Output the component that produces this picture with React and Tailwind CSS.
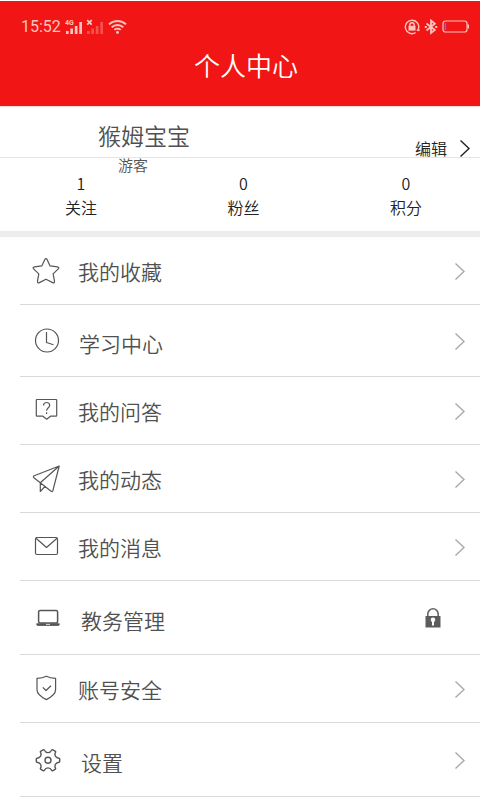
function StarIcon() {
  return (
    <path d="M14 1.600c.6 0 .9.500 1.200 1.100l2.900 6.200 7.300.9c1.400.2 1.800 1.200.9 2.100l-5.200 5 1.400 7.300c.2 1.400-.6 2-1.800 1.400L14 22.200l-6.600 3.400c-1.300.6-2.100 0-1.900-1.400l1.300-7.300-5.200-5c-.9-.9-.5-1.900.9-2.100l7.300-.9 2.900-6.200c.4-.7.7-1.100 1.300-1.100z" />
  )
}

function ClockIcon() {
  return (
    <>
      <circle cx="14" cy="13.5" r="11.5" />
      <path d="M13.500 5v10.500l7 2.200" />
    </>
  )
}

function QuestionIcon() {
  return (
    <>
      <path d="M5 2.500h19q.7 0 .7.700v15.300q0 .7-.7.700h-5.500l-3.800 3-3.800-3H5q-.7 0-.7-.7V3.200q0-.7.7-.7z" />
      <path d="M11.500 8.500c0-4 6.200-4 6.200 0 0 2.300-3.100 2.400-3.100 5.300M14.600 15.200v1.700" />
    </>
  )
}

function PlaneIcon() {
  return (
    <path d="M27.200 1 2.200 10.800c-1 .4-1.100 1.200-.3 1.900l17.200 13.500c.9.600 1.500.4 1.800-.5zM27.200 1 8.300 17.700v8.800l4.700-5.200" />
  )
}

function MailIcon() {
  return (
    <>
      <rect x="3.500" y="4.500" width="22" height="17" rx="1.500" />
      <path d="m4 5.300 10.500 9.200L25 5.300" />
    </>
  )
}

function LaptopIcon() {
  return (
    <>
      <rect x="4.600" y="6.600" width="19" height="12.500" rx="1.500" strokeWidth="1.500" />
      <path d="M2.700 19.700h22.600v.8q0 1-1.500 1H4.200q-1.500 0-1.500-1z" fill="currentColor" strokeWidth=".8" />
      <path d="M12 20.400h4" stroke="#fff" strokeWidth=".8" />
    </>
  )
}

function ShieldIcon() {
  return (
    <>
      <path d="M14.300 1.200c2.400 1.300 5.700 2 9.300 2.100v11.500c0 4-4 7.200-9.300 9.800-5.300-2.600-9.300-5.800-9.300-9.800V3.300c3.600-.1 6.900-.8 9.300-2.100z" />
      <path d="m10.800 12.300 3.200 3.200 5-4.700" />
    </>
  )
}

function GearIcon() {
  return (
    <>
      <path d="M9.500 3.600q.6 0 .9.700 1.100 2.300 3.600 2.300t3.600-2.300q.3-.7.900-.7l2.900 1.700q.4.400.1 1-1.200 2.200.1 4 1.100 1.700 3.400 1.900.7 0 .7.700v2.700q0 .7-.7.700-2.300.2-3.400 1.900-1.300 1.800-.1 4 .3.600-.1 1l-2.900 1.700q-.6 0-.9-.7-1.100-2.300-3.600-2.300t-3.600 2.300q-.3.700-.9.700l-2.900-1.700q-.4-.4-.1-1 1.200-2.200-.1-4-1.100-1.700-3.400-1.900-.7 0-.7-.7v-2.700q0-.7.7-.7 2.300-.2 3.400-1.900 1.300-1.800.1-4-.3-.6.100-1z" strokeWidth="1.400" />
      <circle cx="14" cy="14.300" r="3" strokeWidth="1.400" />
    </>
  )
}

function ChevronIcon({ className }) {
  return (
    <svg className={className} width="12" height="18" viewBox="0 0 12 18" fill="none" stroke="currentColor" strokeWidth="1.400">
      <path d="m1.500 1.500 8.500 8-8.500 8" />
    </svg>
  )
}

function LockIcon() {
  return (
    <svg className="mr-[39px]" width="16" height="20" viewBox="0 0 16 20">
      <path d="M2.800 9V6a5.200 5.200 0 0 1 10.400 0V9" fill="none" stroke="#666" strokeWidth="1.600" />
      <path d="M.5 8h15v11.500H.5z" fill="#5c5c5c" />
      <circle cx="8" cy="11.800" r="2.300" fill="#fff" />
      <path d="M7 12.500h2v5H7z" fill="#fff" />
    </svg>
  )
}

function StatusBar() {
  return (
    <div className="flex h-7 items-center justify-between pl-[21px] pr-[10px] text-[#fcc4bd]">
      <div className="flex items-center">
        <span className="font-[Roboto,sans-serif] text-base leading-5 font-normal">15:52</span>
        <svg className="ml-1" width="40" height="16" viewBox="0 0 40 16" fill="currentColor">
          <text x="0" y="6" fontSize="7" fontWeight="700" fontFamily="Roboto, sans-serif">4G</text>
          <path d="M1 12h2.700v3H1zM5.300 9.500H8V15H5.300zM9.800 7h2.700v8H9.800zM14.300 3H17v12h-2.700z" />
          <path d="m22.200 1.200 4.500 4.500m0-4.500-4.500 4.500" stroke="currentColor" strokeWidth="1.800" />
          <path d="M22 12h2.700v3H22zM26.300 9.500H29V15h-2.700zM30.800 7h2.700v8h-2.700zM35.300 3H38v12h-2.700z" opacity=".35" />
        </svg>
        <svg className="ml-[3px]" width="19" height="16" viewBox="0 0 19 16" fill="none" stroke="currentColor" strokeWidth="1.900">
          <path d="M1 5.400a12.500 12.500 0 0 1 17 0M3.700 8.200a8.600 8.600 0 0 1 11.600 0M6.300 10.900a4.800 4.800 0 0 1 6.400 0" />
          <circle cx="9.500" cy="13.200" r="1.500" fill="currentColor" stroke="none" />
        </svg>
      </div>
      <div className="flex items-center gap-1">
        <svg width="16" height="16" viewBox="0 0 16 16" fill="none" stroke="currentColor" strokeWidth="1.400">
          <path d="M11.500 13.700a6.700 6.700 0 1 1 2.900-3.600M13 11.800l1.400-1.700.8 2" />
          <path d="M5.800 7.500V6a2.200 2.200 0 0 1 4.400 0v1.500" />
          <path d="M4.500 6.800h7v4.800h-7z" fill="currentColor" stroke="none" />
        </svg>
        <svg width="14" height="16" viewBox="0 0 14 16" fill="none" stroke="currentColor" strokeWidth="1.800">
          <path d="m2.500 4.500 8.300 6.500L7 14v-12.500l3.800 3.300-8.300 6.700" />
          <path d="M.8 8h2M11.200 8h2" />
        </svg>
        <svg width="28" height="14" viewBox="0 0 28 14">
          <rect x="1" y="1" width="24" height="11" rx="2.500" fill="none" stroke="currentColor" strokeWidth="1.200" />
          <path d="M25.500 4.500h1.500v4h-1.500z" fill="currentColor" />
          <path d="M2.600 2.800h1.600v7.400H2.600z" fill="#7a6be0" />
        </svg>
      </div>
    </div>
  )
}

const stats = [
  { label: '关注', count: 1 },
  { label: '粉丝', count: 0 },
  { label: '积分', count: 0 },
]

const normalRow = 'h-[68px] pl-3 gap-[18px]'
const tallRow = 'h-[74px] pl-[14px] gap-[19px]'

const menu = [
  { label: '我的收藏', icon: <StarIcon />, row: normalRow },
  { label: '学习中心', icon: <ClockIcon />, row: 'h-[72px] pl-[13px] gap-[18px]', text: 'pt-1' },
  { label: '我的问答', icon: <QuestionIcon />, row: normalRow },
  { label: '我的动态', icon: <PlaneIcon />, row: normalRow },
  { label: '我的消息', icon: <MailIcon />, row: normalRow },
  { label: '教务管理', icon: <LaptopIcon />, row: tallRow, text: 'pt-1', locked: true },
  { label: '账号安全', icon: <ShieldIcon />, row: normalRow },
  { label: '设置', icon: <GearIcon />, row: tallRow, text: 'pt-1' },
]

function MenuRow({ item }) {
  return (
    <li>
      <a href="#" className={`flex items-center border-b border-[#d9d9d9] ${item.row}`}>
        <svg className="shrink-0 text-[#555]" width="28" height="28" viewBox="0 0 28 28" fill="none" stroke="currentColor" strokeWidth="1.200" strokeLinejoin="round">
          {item.icon}
        </svg>
        <span className={`flex-1 text-[21px] leading-7 text-[#505050] ${item.text ?? ''}`}>{item.label}</span>
        {item.locked ? <LockIcon /> : <ChevronIcon className="mr-[14px] text-[#aaa]" />}
      </a>
    </li>
  )
}

export default function App() {
  return (
    <div className="min-h-screen bg-white font-['Noto_Sans_CJK_SC',sans-serif] font-[350]">
      <header className="border-t border-b border-t-white border-b-[#fbdcd3] bg-[#f11515] pt-3 pb-[18px]">
        <StatusBar />
        <h1 className="flex h-[47px] items-center justify-center pl-3 text-[26px] leading-9 text-white">个人中心</h1>
      </header>

      <section className="border-b-[6px] border-[#ededed]">
        <div className="flex h-[51px] items-end justify-between border-b border-[#e6e6e6] pr-[9px] pl-[98px]">
          <h2 className="pb-2 text-[23px] leading-7 text-[#505050]">猴姆宝宝</h2>
          <button type="button" className="flex items-center gap-3 text-base leading-4 text-[#222]">
            编辑
            <ChevronIcon />
          </button>
        </div>
        <p className="pl-[118px] text-[15px] leading-[14px] text-[#555]">游客</p>
        <ul className="flex justify-between pt-[1px] pr-[58px] pb-[10px] pl-[65px] text-center text-base text-[#222]">
          {stats.map((s) => (
            <li key={s.label} className="flex flex-col">
              <span className="leading-5">{s.count}</span>
              <span className="leading-7">{s.label}</span>
            </li>
          ))}
        </ul>
      </section>

      <nav>
        <ul className="ml-5">
          {menu.map((item) => (
            <MenuRow key={item.label} item={item} />
          ))}
        </ul>
      </nav>
    </div>
  )
}
